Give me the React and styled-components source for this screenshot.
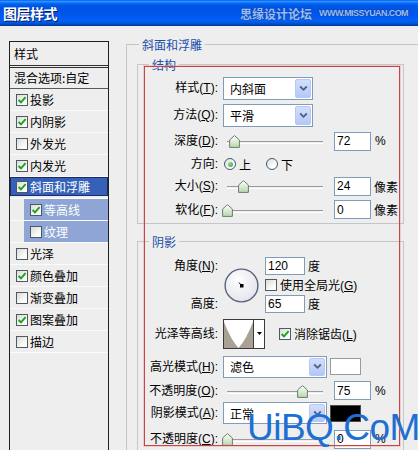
import React from "react";
import styled, { createGlobalStyle } from "styled-components";

const Global = createGlobalStyle`
  html, body { margin: 0; padding: 0; background: #eeeeee; }
  body { font-family: "Liberation Sans", "Noto Sans CJK SC", sans-serif; }
`;

const FONT = `"Liberation Sans", "Noto Sans CJK SC", sans-serif`;

const Window = styled.div`
  position: relative;
  width: 418px;
  height: 450px;
  overflow: hidden;
  background: #eeeeee;
  font-family: ${FONT};
  font-size: 12px;
  color: #000;
`;

const TitleBar = styled.div`
  height: 26px;
  box-sizing: border-box;
  display: flex;
  align-items: center;
  justify-content: space-between;
  padding: 0 10px 0 3px;
  background: linear-gradient(
    to bottom,
    #0058ee 0%, #3593ff 5%, #1a82ff 9%, #036ffc 12%, #0262ee 16%,
    #0057e5 22%, #0054e3 30%, #0055eb 56%, #005bf5 68%, #0263f2 80%,
    #0058e0 88%, #0048bb 94%, #00329a 100%
  );
`;

const Title = styled.span`
  color: #fff;
  font-family: "Noto Sans CJK SC", sans-serif;
  font-weight: 700;
  font-size: 14px;
  letter-spacing: -0.5px;
  text-shadow: 1px 1px 0 #0a1b6b;
`;

const Brand = styled.div`
  display: flex;
  align-items: center;
  gap: 7px;
  color: #98bff2;
  text-shadow: 0 0 1px #123a9a, 0 0 1px #123a9a;
`;

const BrandCn = styled.span`
  font-family: "Noto Sans CJK SC", sans-serif;
  font-size: 12px;
  font-weight: 700;
`;

const BrandEn = styled.span`
  font-family: "Liberation Sans", sans-serif;
  font-size: 9px;
  font-weight: 700;
  letter-spacing: -0.6px;
`;

const Body = styled.div`
  display: flex;
  align-items: flex-start;
`;

/* ---------- left list ---------- */

const Panel = styled.div`
  margin: 15px 0 0 9px;
  width: 100px;
  height: 430px;
  box-sizing: border-box;
  border: 1px solid #202020;
  border-bottom: none;
  background: #eeeeee;
  flex-shrink: 0;
  font-family: "Noto Sans CJK SC", sans-serif;
`;

const PanelHeader = styled.div`
  height: 23px;
  line-height: 23px;
  padding-left: 4px;
`;

const DoubleRule = styled.div`
  height: 1px;
  border-top: 1px solid #303030;
  border-bottom: 1px solid #303030;
`;

const BlendRow = styled.div`
  height: 21px;
  line-height: 20px;
  padding-left: 4px;
  box-sizing: border-box;
  border-bottom: 1px solid #5a5a5a;
`;

const Item = styled.div`
  height: 22px;
  box-sizing: border-box;
  display: flex;
  border-bottom: 1px solid #fbfbfb;
`;

const variants = {
  normal: `
    padding-left: 6px;
  `,
  sel: `
    margin-bottom: 2px;
    padding-left: 5px;
    background: #3562b8;
    border: 1px solid #1c2a68;
    color: #ffffff;
  `,
  sub: `
    margin-left: 14px;
    padding-left: 6px;
    background: #8ea5d5;
    color: #ffffff;
  `,
};

const ItemBody = styled.div`
  flex: 1;
  display: flex;
  align-items: center;
  gap: 2px;
  ${(p) => variants[p.$variant || "normal"]}
`;

const CheckBox = styled.span`
  width: 12px;
  height: 12px;
  box-sizing: border-box;
  border: 1px solid #4c5a68;
  background: linear-gradient(135deg, #dcdcd4, #fbfbf8 70%);
  display: flex;
  align-items: center;
  justify-content: center;
  flex-shrink: 0;
`;

const Check = ({ checked }) => (
  <CheckBox>
    {checked && (
      <svg width="10" height="10" viewBox="0 0 10 10">
        <polyline
          points="1.6,5 4,7.4 8.6,2.2"
          fill="none"
          stroke="#21a121"
          strokeWidth="2"
        />
      </svg>
    )}
  </CheckBox>
);

const items = [
  { t: "投影", c: true },
  { t: "内阴影", c: true },
  { t: "外发光", c: false },
  { t: "内发光", c: true },
  { t: "斜面和浮雕", c: true, v: "sel" },
  { t: "等高线", c: true, v: "sub" },
  { t: "纹理", c: false, v: "sub" },
  { t: "光泽", c: false },
  { t: "颜色叠加", c: true },
  { t: "渐变叠加", c: false },
  { t: "图案叠加", c: true },
  { t: "描边", c: false },
];

/* ---------- right side ---------- */

const Right = styled.div`
  margin-top: 18px;
  margin-left: 17px;
`;

const Group = styled.div`
  box-sizing: border-box;
  border: 1px solid #c6c6c6;
  width: ${(p) => p.$w}px;
  margin-top: ${(p) => p.$mt || 0}px;
  margin-left: ${(p) => p.$ml || 0}px;
  padding-bottom: ${(p) => p.$pb || 0}px;
  ${(p) => (p.$open ? "border-right: none;" : "")}
`;

const GroupTitle = styled.div`
  width: fit-content;
  margin: -7px 0 0 ${(p) => p.$indent}px;
  padding: 0 3px;
  background: #eeeeee;
  color: #1a4fa8;
  font-family: "Noto Sans CJK SC", sans-serif;
  font-size: 12px;
  line-height: 14px;
`;

const Rows = styled.div`
  margin-top: ${(p) => p.$mt || 0}px;
`;

const Row = styled.div`
  display: flex;
  align-items: center;
  height: ${(p) => p.$h}px;
`;

const Label = styled.span`
  width: 80px;
  flex-shrink: 0;
  text-align: right;
  white-space: nowrap;
  line-height: 14px;
  & u { text-decoration: underline; }
`;

const SelectBox = styled.div`
  margin-left: 5px;
  width: ${(p) => p.$w}px;
  height: ${(p) => p.$h}px;
  box-sizing: border-box;
  border: 1px solid #7f9db9;
  background: #fff;
  display: flex;
  align-items: center;
  justify-content: space-between;
  padding: 1px;
  flex-shrink: 0;
`;

const SelectText = styled.span`
  padding-left: 5px;
  font-family: "Noto Sans CJK SC", sans-serif;
  font-size: 12px;
`;

const DropBtn = styled.span`
  width: 16px;
  align-self: stretch;
  box-sizing: border-box;
  border-radius: 2px;
  border: 1px solid #b6c8f2;
  background: linear-gradient(to bottom, #d2defc, #b4c8f6);
  display: flex;
  align-items: center;
  justify-content: center;
`;

const Select = ({ w, h, value }) => (
  <SelectBox $w={w} $h={h}>
    <SelectText>{value}</SelectText>
    <DropBtn>
      <svg width="9" height="7" viewBox="0 0 9 7">
        <polyline
          points="1.2,1.5 4.5,4.8 7.8,1.5"
          fill="none"
          stroke="#4d6185"
          strokeWidth="1.8"
        />
      </svg>
    </DropBtn>
  </SelectBox>
);

const Field = styled.div`
  margin-left: ${(p) => p.$ml ?? 5}px;
  width: ${(p) => p.$w}px;
  height: ${(p) => p.$h}px;
  box-sizing: border-box;
  border: 1px solid #7f9db9;
  background: #fff;
  padding-left: 2px;
  display: flex;
  align-items: center;
  font-family: "Liberation Sans", sans-serif;
  font-size: 12px;
  flex-shrink: 0;
`;

const Unit = styled.span`
  margin-left: ${(p) => p.$ml}px;
  white-space: nowrap;
  font-family: ${FONT};
`;

const SliderWrap = styled.div`
  position: relative;
  margin-left: 5px;
  width: 106px;
  height: 16px;
  flex-shrink: 0;
`;

const Track = styled.div`
  position: absolute;
  left: 4px;
  right: 6px;
  top: 8px;
  height: 1px;
  border-top: 1px solid #9a9a9a;
  border-bottom: 1px solid #ffffff;
`;

const Thumb = styled.svg`
  position: absolute;
  top: 2px;
`;

const Slider = ({ pos }) => (
  <SliderWrap>
    <Track />
    <Thumb width="11" height="13" viewBox="0 0 11 13" style={{ left: pos - 5.5 }}>
      <defs>
        <linearGradient id="tg" x1="0" y1="0" x2="0" y2="1">
          <stop offset="0" stopColor="#ffffff" />
          <stop offset="1" stopColor="#b5d9aa" />
        </linearGradient>
      </defs>
      <polygon
        points="5.5,0.6 10.4,5 10.4,12.4 0.6,12.4 0.6,5"
        fill="url(#tg)"
        stroke="#6f7c70"
        strokeWidth="1"
      />
    </Thumb>
  </SliderWrap>
);

const RadioCircle = styled.span`
  margin-left: ${(p) => p.$ml}px;
  width: 12px;
  height: 12px;
  box-sizing: border-box;
  border-radius: 50%;
  border: 1px solid #3d5878;
  background: linear-gradient(135deg, #dcdcd4, #ffffff 70%);
  display: flex;
  align-items: center;
  justify-content: center;
  flex-shrink: 0;
  &::after {
    content: "";
    display: ${(p) => (p.$on ? "block" : "none")};
    width: 5px;
    height: 5px;
    border-radius: 50%;
    background: radial-gradient(circle at 35% 35%, #8ee08e, #2f9a37);
  }
`;

const CjkText = styled.span`
  margin-left: ${(p) => p.$ml || 0}px;
  font-family: ${FONT};
  white-space: nowrap;
  & u { text-decoration: underline; }
`;

const CheckSlot = styled.span`
  margin-left: ${(p) => p.$ml || 0}px;
  display: flex;
`;

const AngleGrid = styled.div`
  margin-top: 7px;
  display: grid;
  grid-template-columns: 80px 35px auto;
  grid-template-rows: 19px 19px 19px;
  column-gap: 6px;
  align-items: center;
`;

const Dial = styled.svg`
  grid-column: 2;
  grid-row: 1 / 4;
  align-self: center;
  margin-top: 1px;
`;

const Cell = styled.div`
  grid-column: ${(p) => p.$col};
  grid-row: ${(p) => p.$row};
  display: flex;
  align-items: center;
`;

const ContourBox = styled.div`
  margin-left: 5px;
  width: 42px;
  height: 30px;
  box-sizing: border-box;
  border: 1px solid #3a3a3a;
  background: #fff;
  display: flex;
  flex-shrink: 0;
`;

const ContourArrow = styled.div`
  flex: 1;
  border-left: 1px solid #3a3a3a;
  display: flex;
  align-items: center;
  justify-content: center;
`;

const Swatch = styled.div`
  margin-left: 3px;
  width: 31px;
  height: 17px;
  box-sizing: border-box;
  border: 1px solid ${(p) => (p.$c === "#000000" ? "#4a4a4a" : "#9a9a9a")};
  background: ${(p) => p.$c};
  flex-shrink: 0;
`;

const RedFrame = styled.div`
  position: absolute;
  left: 144px;
  top: 66px;
  width: 256px;
  height: 380px;
  box-sizing: border-box;
  border: 1px solid #c94545;
  box-shadow: 0 0 0 1px rgba(235, 160, 160, 0.45);
  pointer-events: none;
`;

const Watermark = styled.div`
  position: absolute;
  left: 247px;
  top: 409px;
  font-family: "Liberation Sans", sans-serif;
  font-size: 37px;
  line-height: 37px;
  letter-spacing: -0.5px;
  color: #1d6fd3;
  white-space: nowrap;
  pointer-events: none;
`;

export default function App() {
  return (
    <Window>
      <Global />
      <TitleBar>
        <Title>图层样式</Title>
        <Brand>
          <BrandCn>思缘设计论坛</BrandCn>
          <BrandEn>WWW.MISSYUAN.COM</BrandEn>
        </Brand>
      </TitleBar>
      <Body>
        <Panel>
          <PanelHeader>样式</PanelHeader>
          <DoubleRule />
          <BlendRow>混合选项:自定</BlendRow>
          {items.map((it) => (
            <Item key={it.t}>
              <ItemBody $variant={it.v}>
                <Check checked={it.c} />
                <span>{it.t}</span>
              </ItemBody>
            </Item>
          ))}
        </Panel>

        <Right>
          <Group $w={320} $open>
            <GroupTitle $indent={12}>斜面和浮雕</GroupTitle>

            <Group $w={267} $mt={12} $ml={10} $pb={1}>
              <GroupTitle $indent={11}>结构</GroupTitle>
              <Rows $mt={3}>
                <Row $h={26}>
                  <Label>样式(<u>T</u>):</Label>
                  <Select w={90} h={23} value="内斜面" />
                </Row>
                <Row $h={28}>
                  <Label>方法(<u>Q</u>):</Label>
                  <Select w={90} h={23} value="平滑" />
                </Row>
                <Row $h={24}>
                  <Label>深度(<u>D</u>):</Label>
                  <Slider pos={11.5} />
                  <Field $w={37} $h={19}>72</Field>
                  <Unit $ml={4}>%</Unit>
                </Row>
                <Row $h={22}>
                  <Label>方向:</Label>
                  <RadioCircle $ml={6} $on />
                  <CjkText $ml={3}>上</CjkText>
                  <RadioCircle $ml={15} />
                  <CjkText $ml={3}>下</CjkText>
                </Row>
                <Row $h={22}>
                  <Label>大小(<u>S</u>):</Label>
                  <Slider pos={20} />
                  <Field $w={37} $h={19}>24</Field>
                  <Unit $ml={3}>像素</Unit>
                </Row>
                <Row $h={25}>
                  <Label>软化(<u>F</u>):</Label>
                  <Slider pos={4.5} />
                  <Field $w={37} $h={19}>0</Field>
                  <Unit $ml={3}>像素</Unit>
                </Row>
              </Rows>
            </Group>

            <Group $w={267} $mt={17} $ml={10} $pb={20}>
              <GroupTitle $indent={11}>阴影</GroupTitle>
              <AngleGrid>
                <Cell $col={1} $row={1}>
                  <Label>角度(<u>N</u>):</Label>
                </Cell>
                <Cell $col={1} $row={3}>
                  <Label>高度:</Label>
                </Cell>
                <Dial width="35" height="35" viewBox="0 0 35 35">
                  <defs>
                    <radialGradient id="dg" cx="40%" cy="35%" r="70%">
                      <stop offset="0" stopColor="#ffffff" />
                      <stop offset="1" stopColor="#e2e2ea" />
                    </radialGradient>
                  </defs>
                  <circle cx="17.5" cy="17.5" r="16.4" fill="url(#dg)" stroke="#59627f" strokeWidth="1.4" />
                  <line x1="17" y1="17" x2="15" y2="14.5" stroke="#000" strokeWidth="1" />
                  <rect x="16" y="16" width="3.5" height="3.5" fill="#000" />
                </Dial>
                <Cell $col={3} $row={1}>
                  <Field $ml={0} $w={40} $h={18}>120</Field>
                  <Unit $ml={3}>度</Unit>
                </Cell>
                <Cell $col={3} $row={2}>
                  <Check checked={false} />
                  <CjkText $ml={3}>使用全局光(<u>G</u>)</CjkText>
                </Cell>
                <Cell $col={3} $row={3}>
                  <Field $ml={0} $w={40} $h={18}>65</Field>
                  <Unit $ml={3}>度</Unit>
                </Cell>
              </AngleGrid>

              <Row $h={41}>
                <Label>光泽等高线:</Label>
                <ContourBox>
                  <svg width="29" height="28" viewBox="0 0 29 28">
                    <rect width="29" height="28" fill="#ffffff" />
                    <path d="M0,28 L0,2 Q7,20 14.5,28 Z" fill="#a8a294" />
                    <path d="M29,28 L29,2 Q22,20 14.5,28 Z" fill="#a8a294" />
                  </svg>
                  <ContourArrow>
                    <svg width="5" height="3" viewBox="0 0 5 3">
                      <polygon points="0,0 5,0 2.5,3" fill="#000" />
                    </svg>
                  </ContourArrow>
                </ContourBox>
                <CheckSlot $ml={14}>
                  <Check checked />
                </CheckSlot>
                <CjkText $ml={3}>消除锯齿(<u>L</u>)</CjkText>
              </Row>
              <Row $h={25}>
                <Label>高光模式(<u>H</u>):</Label>
                <Select w={104} h={22} value="滤色" />
                <Swatch $c="#ffffff" />
              </Row>
              <Row $h={23}>
                <Label>不透明度(<u>O</u>):</Label>
                <Slider pos={79} />
                <Field $w={37} $h={19}>75</Field>
                <Unit $ml={4}>%</Unit>
              </Row>
              <Row $h={22}>
                <Label>阴影模式(<u>A</u>):</Label>
                <Select w={104} h={22} value="正常" />
                <Swatch $c="#000000" />
              </Row>
              <Row $h={30}>
                <Label>不透明度(<u>C</u>):</Label>
                <Slider pos={4.5} />
                <Field $w={37} $h={19}>0</Field>
                <Unit $ml={4}>%</Unit>
              </Row>
            </Group>
          </Group>
        </Right>
      </Body>
      <RedFrame />
      <Watermark>UiBQ.CoM</Watermark>
    </Window>
  );
}
